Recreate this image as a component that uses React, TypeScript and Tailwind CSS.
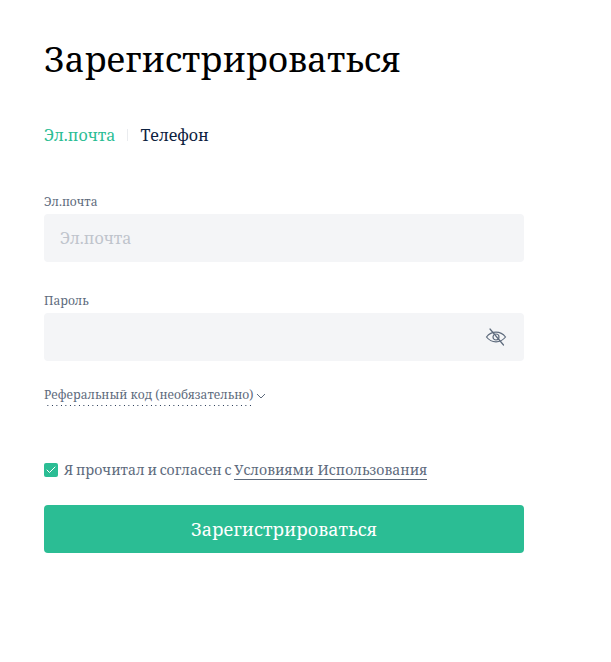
import { useState } from 'react'
import { Check } from 'lucide-react'

function EyeOff() {
  return (
    <svg width="22" height="22" viewBox="0 0 22 22" fill="none" stroke="#5e6b7d" strokeWidth="1.2" strokeLinecap="round">
      <path d="M1.500 11c2.500-3.200 5.600-4.800 9.500-4.800s7 1.600 9.500 4.800c-2.500 3.200-5.600 4.800-9.500 4.800S4 14.200 1.500 11z" />
      <circle cx="11" cy="11" r="3" />
      <path d="M5 3l13.500 16" />
    </svg>
  )
}

export default function App() {
  const [email, setEmail] = useState('')
  const [password, setPassword] = useState('')

  return (
    <div className="min-h-[662px] bg-white pl-[44px] pt-[37px] font-['Noto_Serif','DejaVu_Serif','Liberation_Serif',serif]">
      <div className="w-[480px]">
        <h1 className="text-[34.7px] leading-[44px] text-black">Зарегистрироваться</h1>

        {/* Tabs */}
        <div className="mt-[42px] flex items-center text-[16px] leading-[24px]">
          <span className="text-[#2bbd94]">Эл.почта</span>
          <span className="mx-3 h-3 w-px bg-[#eaecef]" />
          <span className="text-[#0d2240]">Телефон</span>
        </div>

        {/* Email */}
        <label className="mt-[46px] block text-[12px] leading-[18px] text-[#5e6b7d]">Эл.почта</label>
        <input
          value={email}
          onChange={(e) => setEmail(e.target.value)}
          placeholder="Эл.почта"
          className="mt-[3px] block h-[48px] w-full rounded bg-[#f4f5f7] px-4 text-[16px] outline-none placeholder:text-[#bfc4cc]"
        />

        {/* Password */}
        <label className="mt-[30px] block text-[12px] leading-[18px] text-[#5e6b7d]">Пароль</label>
        <div className="mt-[3px] flex h-[48px] items-center rounded bg-[#f4f5f7] pl-4 pr-[17px]">
          <input
            type="password"
            value={password}
            onChange={(e) => setPassword(e.target.value)}
            className="min-w-0 flex-1 bg-transparent text-[16px] outline-none"
          />
          <EyeOff />
        </div>

        {/* Referral */}
        <div className="mt-[25px] flex items-center text-[12px] leading-[18px] text-[#5e6b7d]">
          <span className="bg-[linear-gradient(to_right,#0d2240_1px,transparent_1px)] bg-[length:4.5px_1px] bg-bottom bg-repeat-x pb-[2px] tracking-[0.03px]">
            Реферальный код (необязательно)
          </span>
          <svg width="10" height="6" viewBox="0 0 10 6" fill="none" stroke="#5e6b7d" strokeWidth="1" className="mb-[1px] ml-[3px]">
            <path d="M1 1l4 4 4-4" />
          </svg>
        </div>

        {/* Terms */}
        <div className="mt-[54px] flex items-center text-[14px] leading-[20px] text-[#5e6b7d]">
          <span className="mr-[6px] flex h-[14px] w-[14px] items-center justify-center rounded-[2px] bg-[#2bbd94]">
            <Check size={12} color="white" strokeWidth={2} />
          </span>
          <span>
            <span className="[word-spacing:-0.8px]">Я прочитал и согласен с </span>
            <a className="border-b border-[#5e6b7d] tracking-[0.08px]">Условиями Использования</a>
          </span>
        </div>

        <button className="mt-[25px] h-[48px] w-full rounded bg-[#2bbd94] text-[18px] tracking-[0.05px] text-white">
          Зарегистрироваться
        </button>
      </div>
    </div>
  )
}
